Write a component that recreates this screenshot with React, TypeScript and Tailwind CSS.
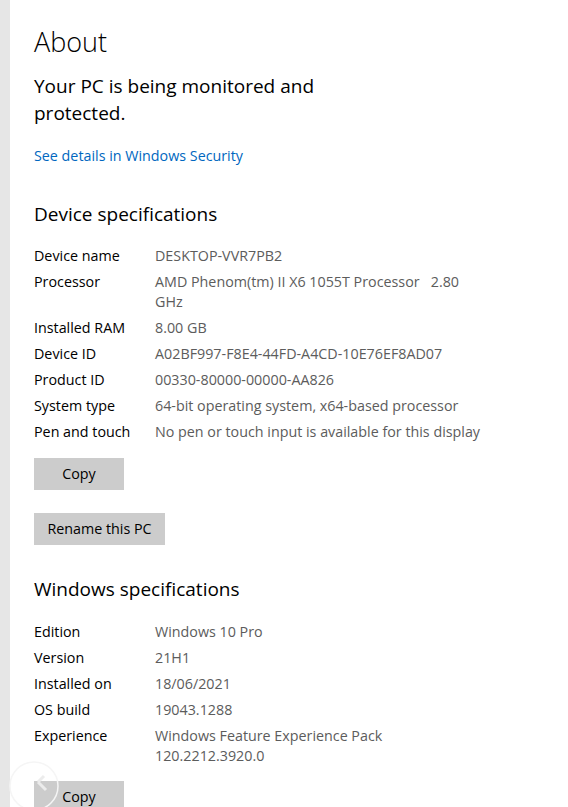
import React from "react";

const font = { fontFamily: '"Open Sans", "Noto Sans", sans-serif' };

function Row({ label, value }: { label: string; value: React.ReactNode }) {
  return (
    <div className="flex text-[14.3px] leading-[20px]">
      <div className="w-[121px] shrink-0 text-[#000000]">{label}</div>
      <div className="text-[#5c5c5c]">{value}</div>
    </div>
  );
}

export default function App() {
  return (
    <div className="relative flex h-[807px] w-[568px] items-start overflow-hidden bg-white" style={font}>
      <div className="h-[807px] w-[10px] shrink-0 bg-[#e6e6e6]" />
      <div className="block pl-[24px] pt-[24px] text-black">
        <h1 className="text-[27px] font-light leading-[36px]">About</h1>
        <p className="mt-[13px] text-[19px] leading-[27px]">
          Your PC is being monitored and
          <br />
          protected.
        </p>
        <div className="mt-[19px] text-[14.3px] leading-[20px] text-[#0067c0]">See details in Windows Security</div>

        <h2 className="mt-[34px] text-[19px] leading-[28px]">Device specifications</h2>
        <div className="mt-[18px] flex flex-col gap-[6px]">
          <Row label="Device name" value="DESKTOP-VVR7PB2" />
          <Row
            label="Processor"
            value={
              <>
                AMD Phenom(tm) II X6 1055T Processor&nbsp;&nbsp;&nbsp;2.80
                <br />
                GHz
              </>
            }
          />
          <Row label="Installed RAM" value="8.00 GB" />
          <Row label="Device ID" value="A02BF997-F8E4-44FD-A4CD-10E76EF8AD07" />
          <Row label="Product ID" value="00330-80000-00000-AA826" />
          <Row label="System type" value="64-bit operating system, x64-based processor" />
          <Row label="Pen and touch" value="No pen or touch input is available for this display" />
        </div>
        <div className="mt-[16px] flex h-[32px] w-[90px] items-center justify-center bg-[#cccccc] text-[14.3px] text-black">
          Copy
        </div>
        <div className="mt-[23px] flex h-[32px] w-[131px] items-center justify-center bg-[#cccccc] text-[14.3px] text-black">
          Rename this PC
        </div>

        <h2 className="mt-[30px] text-[19px] leading-[28px]">Windows specifications</h2>
        <div className="mt-[19px] flex flex-col gap-[6px]">
          <Row label="Edition" value="Windows 10 Pro" />
          <Row label="Version" value="21H1" />
          <Row label="Installed on" value="18/06/2021" />
          <Row label="OS build" value="19043.1288" />
          <Row
            label="Experience"
            value={
              <>
                Windows Feature Experience Pack
                <br />
                120.2212.3920.0
              </>
            }
          />
        </div>
        <div className="mt-[15px] flex h-[32px] w-[90px] items-center justify-center bg-[#cccccc] text-[14.3px] text-black">
          Copy
        </div>
      </div>
      <svg className="pointer-events-none absolute left-[4px] top-[752px]" width="60" height="56" viewBox="0 0 60 56">
        <circle cx="30" cy="34" r="24" fill="none" stroke="#f5f5f5" strokeWidth="1.5" />
        <path d="M34 30 L40 24 M34 30 L42 38" stroke="#ececec" strokeWidth="3" fill="none" />
      </svg>
    </div>
  );
}
